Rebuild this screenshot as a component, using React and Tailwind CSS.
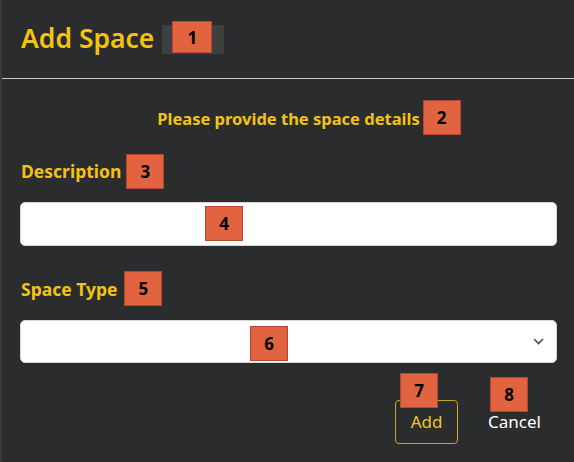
const font = { fontFamily: '"Noto Sans", "Open Sans", Arial, sans-serif' };

const Badge = ({ n, className = '' }) => (
  <span
    className={`absolute flex items-center justify-center w-[38px] h-[35px] bg-[#e2633f] border border-[#b4472d] text-black font-bold text-[17px] leading-none ${className}`}
  >
    {n}
  </span>
);

const App = () => {
  return (
    <div
      style={font}
      className="w-[574px] h-[462px] bg-[#2b2c2e] border-l-2 border-[#3a3b3d] flex flex-col overflow-hidden"
    >
      <div className="h-[79px] shrink-0 border-b border-[#c9c9c9] flex items-center pl-[19px] pb-[1px]">
        <h1 className="text-[26.5px] font-semibold text-[#f3c314] leading-none">Add Space</h1>
        <span className="relative ml-[8px] w-[62px] h-[29px] bg-[#3e3f41] mt-[2px]">
          <Badge n="1" className="left-[10px] top-[-4px] !w-[40px] !h-[32px]" />
        </span>
      </div>

      <div className="flex flex-col pl-[18px] pr-[17px]">
        <div className="flex justify-center mt-[29px]">
          <span className="relative text-[16.5px] font-bold text-[#f3c314] leading-[22px]">
            Please provide the space details
            <Badge n="2" className="left-[calc(100%+3px)] top-[-8px]" />
          </span>
        </div>

        <label className="relative mt-[30px] self-start text-[17.5px] font-bold text-[#f3c314] leading-[22px] pl-[1px]">
          Description
          <Badge n="3" className="left-[calc(100%+5px)] top-[-6px]" />
        </label>
        <div className="relative mt-[20px]">
          <input className="w-full h-[44px] bg-white rounded-[5px] border border-[#d6d6d6] outline-none px-3" />
          <Badge n="4" className="left-[185px] top-[4px]" />
        </div>

        <label className="relative mt-[32px] self-start text-[17.5px] font-bold text-[#f3c314] leading-[22px] pl-[1px]">
          Space Type
          <Badge n="5" className="left-[calc(100%+7px)] top-[-7px]" />
        </label>
        <div className="relative mt-[20px]">
          <div className="w-full h-[43px] bg-white rounded-[5px] border border-[#d6d6d6] flex items-center justify-end pr-[12px]">
            <svg width="11" height="7" viewBox="0 0 11 7" fill="none">
              <path d="M1 1l4.5 4.5L10 1" stroke="#4a4a4a" strokeWidth="1.6" />
            </svg>
          </div>
          <Badge n="6" className="left-[230px] top-[6px]" />
        </div>

        <div className="flex justify-end gap-[14px] mt-[37px]">
          <div className="relative">
            <button className="w-[63px] h-[44px] border border-[#c9a81f] rounded-[4px] text-[#ecc62a] text-[17px]">
              Add
            </button>
            <Badge n="7" className="left-[5px] top-[-27px]" />
          </div>
          <div className="relative">
            <button className="h-[44px] px-[16px] text-white text-[17px]">Cancel</button>
            <Badge n="8" className="left-[18px] top-[-23px]" />
          </div>
        </div>
      </div>
    </div>
  );
};

export default App;
